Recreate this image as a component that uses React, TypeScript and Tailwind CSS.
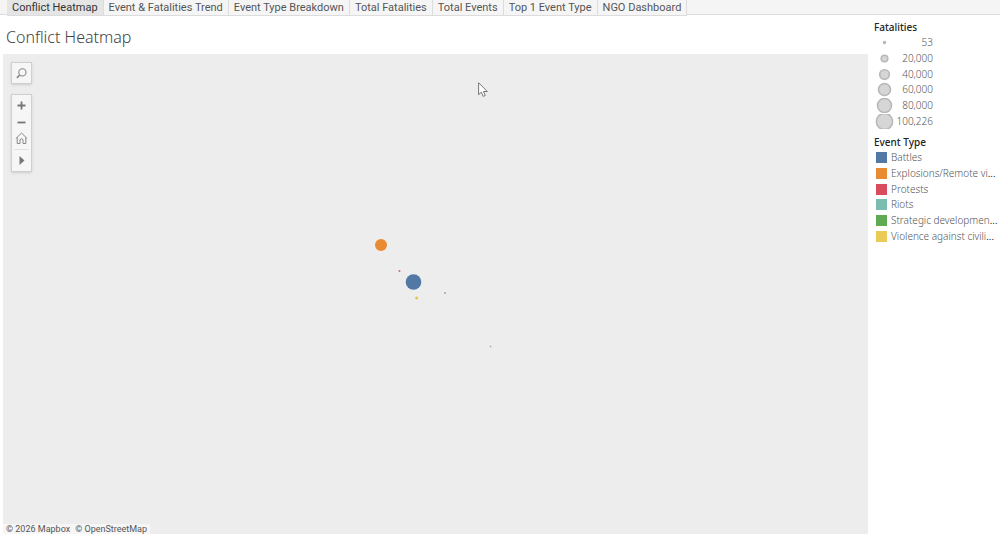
import React from 'react';

const TABS = [
    'Conflict Heatmap',
    'Event & Fatalities Trend',
    'Event Type Breakdown',
    'Total Fatalities',
    'Total Events',
    'Top 1 Event Type',
    'NGO Dashboard',
];

const SIZE_LEGEND = [
    { label: '53', r: 1 },
    { label: '20,000', r: 3.3 },
    { label: '40,000', r: 4.8 },
    { label: '60,000', r: 6 },
    { label: '80,000', r: 7 },
    { label: '100,226', r: 8.1 },
];

// Long names are shortened to the width of the legend column
const EVENT_TYPES = [
    { name: 'Battles', short: 'Battles', color: 'bg-[#5279a5]' },
    { name: 'Explosions/Remote violence', short: 'Explosions/Remote vi', color: 'bg-[#e98b32]' },
    { name: 'Protests', short: 'Protests', color: 'bg-[#d94c5e]' },
    { name: 'Riots', short: 'Riots', color: 'bg-[#7bbdb0]' },
    { name: 'Strategic developments', short: 'Strategic developmen', color: 'bg-[#60aa51]' },
    { name: 'Violence against civilians', short: 'Violence against civili', color: 'bg-[#e9cb55]' },
];

// Mark centres on the map canvas
const MARKS = [
    { name: 'Explosions/Remote violence', x: 378, y: 191, r: 6, color: '#e98b32' },
    { name: 'Protests', x: 396.5, y: 217, r: 1, color: '#c8687a' },
    { name: 'Battles', x: 410.5, y: 228, r: 7.8, color: '#5279a5' },
    { name: 'Violence against civilians', x: 413.7, y: 244, r: 1.5, color: '#e3c848' },
    { name: 'Strategic developments', x: 442, y: 239, r: 0.9, color: '#87ac7c' },
    { name: 'Riots', x: 487.5, y: 292.5, r: 0.9, color: '#9bbab4' },
];

const TOOL_BUTTON = 'flex w-full items-center justify-center text-[#666]';

const WorkbookTabs: React.FC<{ active: string; onSelect: (tab: string) => void }> = ({ active, onSelect }) => (
    <nav className="flex h-4 items-start bg-[#f5f5f5] pl-[7px] font-[Roboto,sans-serif] shadow-[inset_0_-1px_0_#fff,inset_0_-2px_0_#dcdcdc]">
        {TABS.map(tab => (
            <button key={tab} onClick={() => onSelect(tab)}
                className={`h-4 shrink-0 whitespace-nowrap border-r border-b border-[#dcdcdc] px-[5px] text-[11px] leading-[14px] ${tab === active ? 'bg-[#e5e5e5] text-[#333]' : 'bg-[#f5f5f5] text-[#555]'}`}
            >
                {tab}
            </button>
        ))}
    </nav>
);

const MapToolbar: React.FC = () => (
    <div className="absolute top-2 left-2 flex w-[21px] flex-col gap-[10px]">
        <button aria-label="Search" className={`${TOOL_BUTTON} h-[22px] border border-[#d0d0d0] bg-[#f6f6f6] shadow-sm`}>
            <svg width="11" height="11" viewBox="0 0 11 11" fill="none" stroke="#888" strokeWidth="1.1">
                <circle cx="6.4" cy="4.4" r="3.6" />
                <path d="M3.8 7 L0.9 9.9" strokeWidth="1.6" />
            </svg>
        </button>
        <div className="flex flex-col border border-[#d0d0d0] bg-[#f6f6f6] px-[2px] pt-[2px] shadow-sm">
            <button aria-label="Zoom in" className={`${TOOL_BUTTON} h-[17px]`}>
                <svg width="9" height="9" viewBox="0 0 9 9" stroke="#777" strokeWidth="1.8">
                    <path d="M0.5 4.5 H8.5 M4.5 0.5 V8.5" />
                </svg>
            </button>
            <button aria-label="Zoom out" className={`${TOOL_BUTTON} h-4`}>
                <svg width="9" height="9" viewBox="0 0 9 9" stroke="#777" strokeWidth="1.8">
                    <path d="M0.5 4.5 H8.5" />
                </svg>
            </button>
            <button aria-label="Reset map" className={`${TOOL_BUTTON} h-[17px]`}>
                <svg className="shrink-0" width="13" height="13" viewBox="0 0 13 13" fill="none" stroke="#888" strokeWidth="1">
                    <path d="M0.8 6.6 L6.5 1 L12.2 6.6 M2.2 5.6 V11.5 H5 V7.6 Q6.5 6 8 7.6 V11.5 H10.8 V5.6" />
                </svg>
            </button>
            <button aria-label="More tools" className={`${TOOL_BUTTON} mt-[2px] h-[22px] border-t border-[#e2e2e2]`}>
                <svg width="6" height="9" viewBox="0 0 6 9" fill="#777">
                    <path d="M0.5 0 L5.5 4.5 L0.5 9 Z" />
                </svg>
            </button>
        </div>
    </div>
);

const ConflictMap: React.FC = () => (
    <div className="relative min-h-[320px] flex-1 overflow-hidden bg-[#ededed]">
        <svg className="absolute top-0 left-0 h-full w-full" role="img" aria-label="Fatalities by event type">
            {MARKS.map(mark => (
                <circle key={mark.name} cx={mark.x} cy={mark.y} r={mark.r} fill={mark.color} />
            ))}
        </svg>
        <MapToolbar />
        {/* Pointer */}
        <svg className="absolute top-7 left-[475px]" width="11" height="16" viewBox="0 0 11 16" fill="#fff" stroke="#666" strokeWidth="0.9">
            <path d="M0.6 0.8 V12.6 L3.3 10.2 L5.2 14.4 L7.3 13.4 L5.5 9.5 H9.3 Z" />
        </svg>
        <div className="absolute bottom-0 left-0 flex h-[10px] items-center gap-[5px] bg-[#f6f6f6] px-[3px] font-[Roboto,sans-serif] text-[9px] leading-[10px] text-[#555]">
            <a href="#mapbox">© 2026 Mapbox</a>
            <a href="#osm">© OpenStreetMap</a>
        </div>
    </div>
);

const Legends: React.FC = () => (
    <aside className="flex w-[132px] shrink-0 flex-col pt-1 pl-[6px] text-[10px] text-[#555]">
        <section>
            <h2 className="h-[15px] font-medium leading-[15px] text-[#222]">Fatalities</h2>
            <ul className="flex h-[94px] flex-col font-light">
                {SIZE_LEGEND.map(item => (
                    <li key={item.label} className="flex w-[59px] flex-1 items-center justify-between">
                        <svg className="shrink-0" width="21" height="15" viewBox="0 0 21 15">
                            <circle cx="10.5" cy="7.5" r={item.r} fill="#d6d6d6" stroke="#b8b8b8" strokeWidth="1.6" />
                        </svg>
                        <span className="leading-[15px]">{item.label}</span>
                    </li>
                ))}
            </ul>
        </section>
        <section className="mt-[6px]">
            <h2 className="h-[15px] font-medium leading-[15px] text-[#222]">Event Type</h2>
            <ul className="flex h-[94px] flex-col font-light">
                {EVENT_TYPES.map(item => (
                    <li key={item.name} title={item.name} className="flex flex-1 items-center gap-1 pl-[2px]">
                        <span className={`h-[11px] w-[11px] shrink-0 ${item.color}`}></span>
                        <span className="whitespace-nowrap leading-[15px]">
                            {item.short}
                            {item.short !== item.name && <span className="font-[Roboto,sans-serif] font-normal text-[#222]">...</span>}
                        </span>
                    </li>
                ))}
            </ul>
        </section>
    </aside>
);

const App: React.FC = () => {
    const [active, setActive] = React.useState(TABS[0]);

    return (
        <div className="flex h-screen flex-col overflow-hidden bg-white font-['Noto_Sans',sans-serif]">
            <WorkbookTabs active={active} onSelect={setActive} />
            <div className="flex min-h-0 flex-1">
                <main className="flex min-w-0 flex-1 flex-col pl-[3px]">
                    <h1 className="h-[38px] pl-[3px] text-base font-light leading-[42px] text-[#444]">{active}</h1>
                    <ConflictMap />
                </main>
                <Legends />
            </div>
        </div>
    );
};

export default App;
